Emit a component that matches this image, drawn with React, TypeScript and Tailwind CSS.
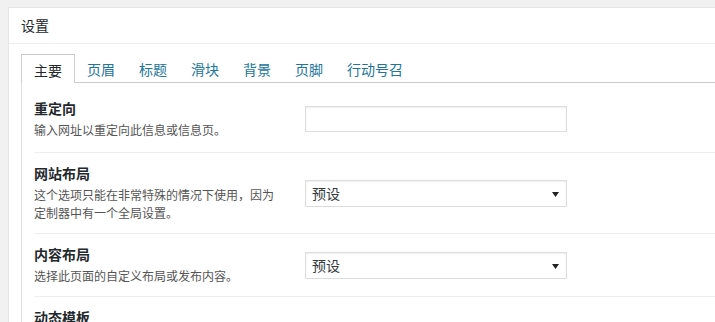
type Row = {
    label: string;
    desc: string[];
    control: "input" | "select";
};

const tabs = ["主要", "页眉", "标题", "滑块", "背景", "页脚", "行动号召"];

const rows: Row[] = [
    { label: "重定向", desc: ["输入网址以重定向此信息或信息页。"], control: "input" },
    {
        label: "网站布局",
        desc: ["这个选项只能在非常特殊的情况下使用，因为定制器中有一个全局设置。"],
        control: "select",
    },
    { label: "内容布局", desc: ["选择此页面的自定义布局或发布内容。"], control: "select" },
];

function Select() {
    return (
        <div className="relative w-[262px] h-[27px] border border-[#ddd] bg-white shadow-[inset_0_1px_2px_rgba(0,0,0,0.07)] flex items-center pl-[6px] text-[14px] text-[#32373c]">
            预设
            <svg
                className="absolute right-[7px] top-[11px]"
                width="7"
                height="5"
                viewBox="0 0 7 5"
            >
                <path d="M0 0 L7 0 L3.5 5 Z" fill="#222" />
            </svg>
        </div>
    );
}

export default function App() {
    return (
        <div
            className="w-[715px] h-[322px] overflow-hidden bg-[#f1f1f1] pl-[8px] pt-[7px]"
            style={{ fontFamily: '"Noto Sans CJK SC", "Noto Sans", sans-serif' }}
        >
            <div className="w-[800px] h-[400px] bg-white border border-[#e5e5e5]">
                <div className="h-[36px] flex items-center px-[12px] border-b border-[#eee] text-[14px] text-[#23282d]">
                    设置
                </div>

                <div className="pl-[12px] pt-[10px]">
                    <div className="flex h-[29px] border-b border-[#ccc]">
                        {tabs.map((t, i) =>
                            i === 0 ? (
                                <div
                                    key={t}
                                    className="h-[29px] -mb-px px-[12px] pt-[2px] flex items-center border border-b-0 border-[#ccc] bg-white text-[14px] text-[#23282d]"
                                >
                                    {t}
                                </div>
                            ) : (
                                <div
                                    key={t}
                                    className="h-[28px] px-[12px] pt-[2px] flex items-center text-[14px] text-[#21759b]"
                                >
                                    {t}
                                </div>
                            )
                        )}
                    </div>

                    <div className="border-l border-[#ddd]">
                        {rows.map((r, i) => (
                            <div
                                key={r.label}
                                className={`ml-[12px] flex items-center border-b border-[#eee] ${i === 0 ? "pt-[16px] pb-[13px]" : "py-[11px]"}`}
                            >
                                <div className="w-[250px] mr-[21px]">
                                    <div className="text-[14px] leading-[18px] font-bold text-[#23282d]">
                                        {r.label}
                                    </div>
                                    <div className="mt-[4px] text-[12px] leading-[18px] text-[#555]">
                                        {r.desc.join("")}
                                    </div>
                                </div>
                                {r.control === "input" ? (
                                    <input
                                        type="text"
                                        className="w-[262px] h-[26px] border border-[#ddd] bg-white shadow-[inset_0_1px_2px_rgba(0,0,0,0.07)] outline-none"
                                    />
                                ) : (
                                    <Select />
                                )}
                            </div>
                        ))}
                        <div className="ml-[12px] pt-[11px]">
                            <div className="text-[14px] leading-[18px] font-bold text-[#23282d]">
                                动态模板
                            </div>
                        </div>
                    </div>
                </div>
            </div>
        </div>
    );
}
